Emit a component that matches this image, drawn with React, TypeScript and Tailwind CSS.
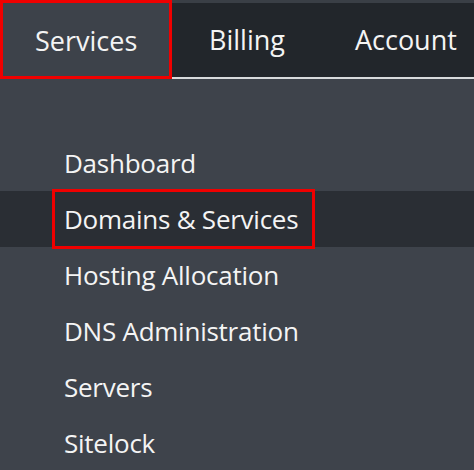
import React from "react";

const items = ["Dashboard", "Domains & Services", "Hosting Allocation", "DNS Administration", "Servers", "Sitelock"];

export default function App() {
  return (
    <div
      className="w-[474px] h-[470px] overflow-hidden bg-[#3e434b] text-[#f4f4f4] flex flex-col font-medium"
      style={{ fontFamily: '"Open Sans", "Noto Sans", sans-serif' }}
    >
      <div className="flex h-[81px] bg-[#3a3f46]">
        <div className="w-[172px] h-[79px] border-[3px] border-[#f00000] bg-[#3d424a] flex items-center pt-[3px] pl-[32px] text-[27px]">
          Services
        </div>
        <div className="flex-1 flex flex-col pt-[3px]">
          <div className="flex-1 bg-[#22262b] flex items-center pt-[1px] text-[27px]">
            <span className="pl-[37px] pr-[36px]">Billing</span>
            <span className="pl-[34px]">Account</span>
          </div>
          <div className="h-[2px] bg-[#d8dadc]" />
        </div>
      </div>
      <div className="flex flex-col pt-[56px]">
        {items.map((t, i) => (
          <div
            key={t}
            className={
              "h-[56px] flex items-center pl-[52px] " + (i === 1 ? "bg-[#2a2e34]" : "")
            }
          >
            <span
              className={
                "h-[60px] flex items-center text-[26px] tracking-[-0.25px] pl-[9px] pr-[14px] border-[3px] " +
                (i === 1 ? "border-[#f00000]" : "border-transparent")
              }
            >
              {t}
            </span>
          </div>
        ))}
      </div>
    </div>
  );
}
